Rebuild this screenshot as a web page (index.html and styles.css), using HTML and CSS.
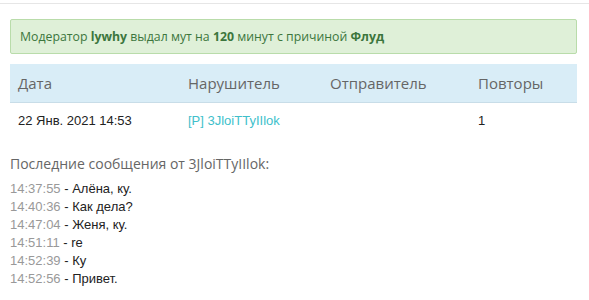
FILE: index.html
```html
<!DOCTYPE html>
<html lang="ru">
<head>
<meta charset="UTF-8">
<title>Мут</title>
<link rel="stylesheet" href="styles.css">
</head>
<body>
    <div class="topline"></div>
    <div class="content">
        <div class="alert">
            Модератор <b>lywhy</b> выдал мут на <b>120</b> минут с причиной <b>Флуд</b>
        </div>

        <table class="punish">
            <thead>
                <tr>
                    <th class="c-date">Дата</th>
                    <th class="c-user">Нарушитель</th>
                    <th class="c-from">Отправитель</th>
                    <th class="c-rep">Повторы</th>
                </tr>
            </thead>
            <tbody>
                <tr>
                    <td>22 Янв. 2021 14:53</td>
                    <td><a href="#">[P] 3JloiTTyIIlok</a></td>
                    <td></td>
                    <td>1</td>
                </tr>
            </tbody>
        </table>

        <p class="last-title">Последние сообщения от 3JloiTTyIIlok:</p>

        <ul class="messages">
            <li><span class="time">14:37:55</span> - Алёна, ку.</li>
            <li><span class="time">14:40:36</span> - Как дела?</li>
            <li><span class="time">14:47:04</span> - Женя, ку.</li>
            <li><span class="time">14:51:11</span> - re</li>
            <li><span class="time">14:52:39</span> - Ку</li>
            <li><span class="time">14:52:56</span> - Привет.</li>
        </ul>
    </div>
</body>
</html>
```

FILE: styles.css
```css
* {
    box-sizing: border-box;
}
body {
    margin: 0;
    padding: 0;
    background-color: #fff;
    font-family: "Liberation Sans", Arial, sans-serif;
    font-size: 13px;
    color: #222;
}
.topline {
    margin-top: 3px;
    border-top: 1px solid #e6e6e6;
}
.content {
    margin: 0 12px 0 10px;
}
.alert {
    margin-top: 15px;
    height: 35px;
    padding: 0 9px;
    line-height: 33px;
    font-family: "Open Sans", sans-serif;
    font-size: 12.3px;
    color: #3c763d;
    background-color: #dff0d8;
    border: 1px solid #b9dcaa;
    border-radius: 2px;
}
.punish {
    width: 100%;
    margin-top: 10px;
    border-collapse: collapse;
}
.punish th {
    height: 38px;
    padding: 0 8px;
    text-align: left;
    font-family: "Open Sans", sans-serif;
    font-size: 15px;
    font-weight: normal;
    color: #666;
    background-color: #d9edf7;
    border-bottom: 1px solid #c8dde8;
}
.punish td {
    height: 37px;
    padding: 0 8px;
    text-align: left;
    color: #222;
}
.c-date { width: 170px; }
.c-user { width: 142px; }
.c-from { width: 148px; }
.punish a {
    color: #40bfcb;
    text-decoration: none;
}
.last-title {
    margin: 15px 0 0 0;
    font-family: "Open Sans", sans-serif;
    font-size: 14px;
    color: #666;
}
.messages {
    list-style: none;
    margin: 7px 0 0 0;
    padding: 0;
}
.messages li {
    line-height: 18px;
    color: #222;
}
.time {
    color: #999;
}
```
